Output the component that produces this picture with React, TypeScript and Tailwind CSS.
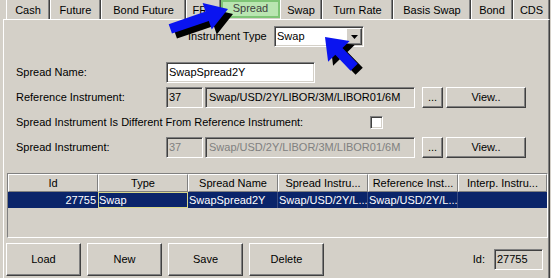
import React from "react";

const sunken =
  "border border-t-[#808080] border-l-[#808080] border-b-white border-r-white shadow-[inset_1px_1px_0_#404040,inset_-1px_-1px_0_#d4d0c8]";
const raised =
  "border border-t-white border-l-white border-b-[#404040] border-r-[#404040] shadow-[inset_-1px_-1px_0_#808080]";

const tabs: { label: string; w: string; sel?: boolean }[] = [
  { label: "Cash", w: "w-[44px]" },
  { label: "Future", w: "w-[51px]" },
  { label: "Bond Future", w: "w-[85px]" },
  { label: "FRA", w: "w-[35px]" },
  { label: "Spread", w: "w-[59px]", sel: true },
  { label: "Swap", w: "w-[42px]" },
  { label: "Turn Rate", w: "w-[71px]" },
  { label: "Basis Swap", w: "w-[78px]" },
  { label: "Bond", w: "w-[42px]" },
  { label: "CDS", w: "w-[37px]" },
];

function arrowPts(L: number, H: number, W: number, s: number) {
  return `0,0 ${-H},${-W / 2} ${-H},${-s / 2} ${-L},${-s / 2} ${-L},${s / 2} ${-H},${s / 2} ${-H},${W / 2}`;
}

function Btn({ w, children }: { w: string; children: React.ReactNode }) {
  return (
    <div className={`${w} h-[21px] ${raised} bg-[#d4d0c8] flex items-center justify-center`}>
      {children}
    </div>
  );
}

export default function App() {
  const a1 = arrowPts(61, 22, 28, 10);
  const a2 = arrowPts(42, 20, 30, 10);
  return (
    <div className="relative w-[551px] h-[278px] overflow-hidden bg-[#d4d0c8] text-[11px] leading-[13px] text-black font-['Liberation_Sans',Arial,sans-serif]">
      {/* Tabs */}
      <div className="flex h-[19px] pl-[6px]">
        {tabs.map((t) =>
          t.sel ? (
            <div
              key={t.label}
              className={`${t.w} h-[18px] bg-[#b9e5b1] border-2 border-[#7ec576] flex items-center justify-center pb-[2px] text-[#404040]`}
            >
              {t.label}
            </div>
          ) : (
            <div
              key={t.label}
              className={`${t.w} h-[19px] border-l border-white border-r border-r-[#404040] shadow-[inset_-1px_0_0_#808080] flex items-center justify-center pt-[1px]`}
            >
              {t.label}
            </div>
          )
        )}
      </div>

      {/* Panel */}
      <div className="ml-[3px] w-[547px] h-[259px] border-l border-t border-white border-r border-r-[#404040] shadow-[inset_-1px_0_0_#808080] flex flex-col">
        {/* Instrument type */}
        <div className="flex items-center mt-[6px] pl-[184px] h-[21px]">
          <div className="w-[86px]">Instrument Type</div>
          <div className={`w-[90px] h-[21px] bg-white ${sunken} flex items-center`}>
            <div className="flex-1 pl-[2px]">Swap</div>
            <div className={`w-[16px] h-[17px] mr-[1px] ${raised} bg-[#d4d0c8] flex items-center justify-center`}>
              <svg width="7" height="4" viewBox="0 0 7 4">
                <polygon points="0,0 7,0 3.5,4" fill="#000" />
              </svg>
            </div>
          </div>
        </div>

        {/* Spread Name */}
        <div className="flex items-center mt-[15px] pl-[12px] h-[21px]">
          <div className="w-[150px]">Spread Name:</div>
          <div className={`w-[149px] h-[21px] bg-white ${sunken} flex items-center pl-[2px]`}>SwapSpread2Y</div>
        </div>

        {/* Reference Instrument */}
        <div className="flex items-center mt-[4px] pl-[12px] h-[21px]">
          <div className="w-[150px]">Reference Instrument:</div>
          <div className={`w-[37px] h-[21px] ${sunken} flex items-center pl-[2px]`}>37</div>
          <div className={`ml-[2px] w-[210px] h-[21px] ${sunken} flex items-center pl-[3px]`}>
            Swap/USD/2Y/LIBOR/3M/LIBOR01/6M
          </div>
          <div className="ml-[7px]">
            <Btn w="w-[21px]">...</Btn>
          </div>
          <div className="ml-[3px]">
            <Btn w="w-[80px]">View..</Btn>
          </div>
        </div>

        {/* Checkbox row */}
        <div className="flex items-center mt-[4px] pl-[12px] h-[21px]">
          <div className="w-[354px]">Spread Instrument Is Different From Reference Instrument:</div>
          <div className={`w-[13px] h-[13px] bg-white ${sunken}`} />
        </div>

        {/* Spread Instrument */}
        <div className="flex items-center mt-[4px] pl-[12px] h-[21px]">
          <div className="w-[150px]">Spread Instrument:</div>
          <div className={`w-[37px] h-[21px] ${sunken} flex items-center pl-[2px] text-[#808080]`}>37</div>
          <div className={`ml-[2px] w-[210px] h-[21px] ${sunken} flex items-center pl-[3px] text-[#808080]`}>
            Swap/USD/2Y/LIBOR/3M/LIBOR01/6M
          </div>
          <div className="ml-[7px]">
            <Btn w="w-[21px]">...</Btn>
          </div>
          <div className="ml-[3px]">
            <Btn w="w-[80px]">View..</Btn>
          </div>
        </div>

        {/* Table */}
        <div className="mt-[15px] ml-[3px] w-[541px] h-[65px] border border-t-[#808080] border-l-[#808080] border-b-white border-r-white flex flex-col">
          <div className="flex h-[18px]">
            {[
              ["Id", "w-[90px]"],
              ["Type", "w-[90px]"],
              ["Spread Name", "w-[90px]"],
              ["Spread Instru...", "w-[90px]"],
              ["Reference Inst...", "w-[90px]"],
              ["Interp. Instru...", "w-[89px]"],
            ].map(([l, w]) => (
              <div
                key={l}
                className={`${w} h-[18px] border-t border-l border-white border-r border-b border-r-[#808080] border-b-[#808080] flex items-center justify-center whitespace-nowrap overflow-hidden`}
              >
                {l}
              </div>
            ))}
          </div>
          <div className="flex h-[16px] bg-[#0a246a] text-white whitespace-nowrap">
            <div className="w-[90px] h-[16px] flex items-center justify-end pr-[2px]">27755</div>
            <div className="w-[90px] h-[16px] border border-[#d6d68a] flex items-center pl-[0px]">Swap</div>
            <div className="w-[90px] h-[16px] flex items-center pl-[1px] border-r border-r-[#3b4c80]">SwapSpread2Y</div>
            <div className="w-[90px] h-[16px] flex items-center pl-[1px] border-r border-r-[#3b4c80] overflow-hidden">Swap/USD/2Y/L...</div>
            <div className="w-[90px] h-[16px] flex items-center pl-[1px] border-r border-r-[#3b4c80] overflow-hidden">Swap/USD/2Y/L...</div>
            <div className="w-[89px] h-[16px]" />
          </div>
        </div>

        {/* Bottom buttons */}
        <div className="flex items-center mt-[5px] pl-[2px] pr-[6px]">
          <div className="flex gap-[6px]">
            {["Load", "New", "Save", "Delete"].map((b) => (
              <div key={b} className={`w-[75px] h-[33px] ${raised} bg-[#d4d0c8] flex items-center justify-center`}>
                {b}
              </div>
            ))}
          </div>
          <div className="ml-auto flex items-center">
            <div className="mr-[9px]">Id:</div>
            <div className={`w-[49px] h-[21px] ${sunken} flex items-center pl-[2px]`}>27755</div>
          </div>
        </div>
      </div>

      {/* Annotation arrows */}
      <svg className="absolute inset-0 pointer-events-none" width="551" height="278" viewBox="0 0 551 278">
        <g transform="translate(233,14) rotate(-19)">
          <polygon points={a1} fill="#000" />
        </g>
        <g transform="translate(228,9) rotate(-19)">
          <polygon points={a1} fill="#0a14f0" />
        </g>
        <g transform="translate(330,41) rotate(-134)">
          <polygon points={a2} fill="#000" />
        </g>
        <g transform="translate(325,37) rotate(-134)">
          <polygon points={a2} fill="#0a14f0" />
        </g>
      </svg>
    </div>
  );
}
